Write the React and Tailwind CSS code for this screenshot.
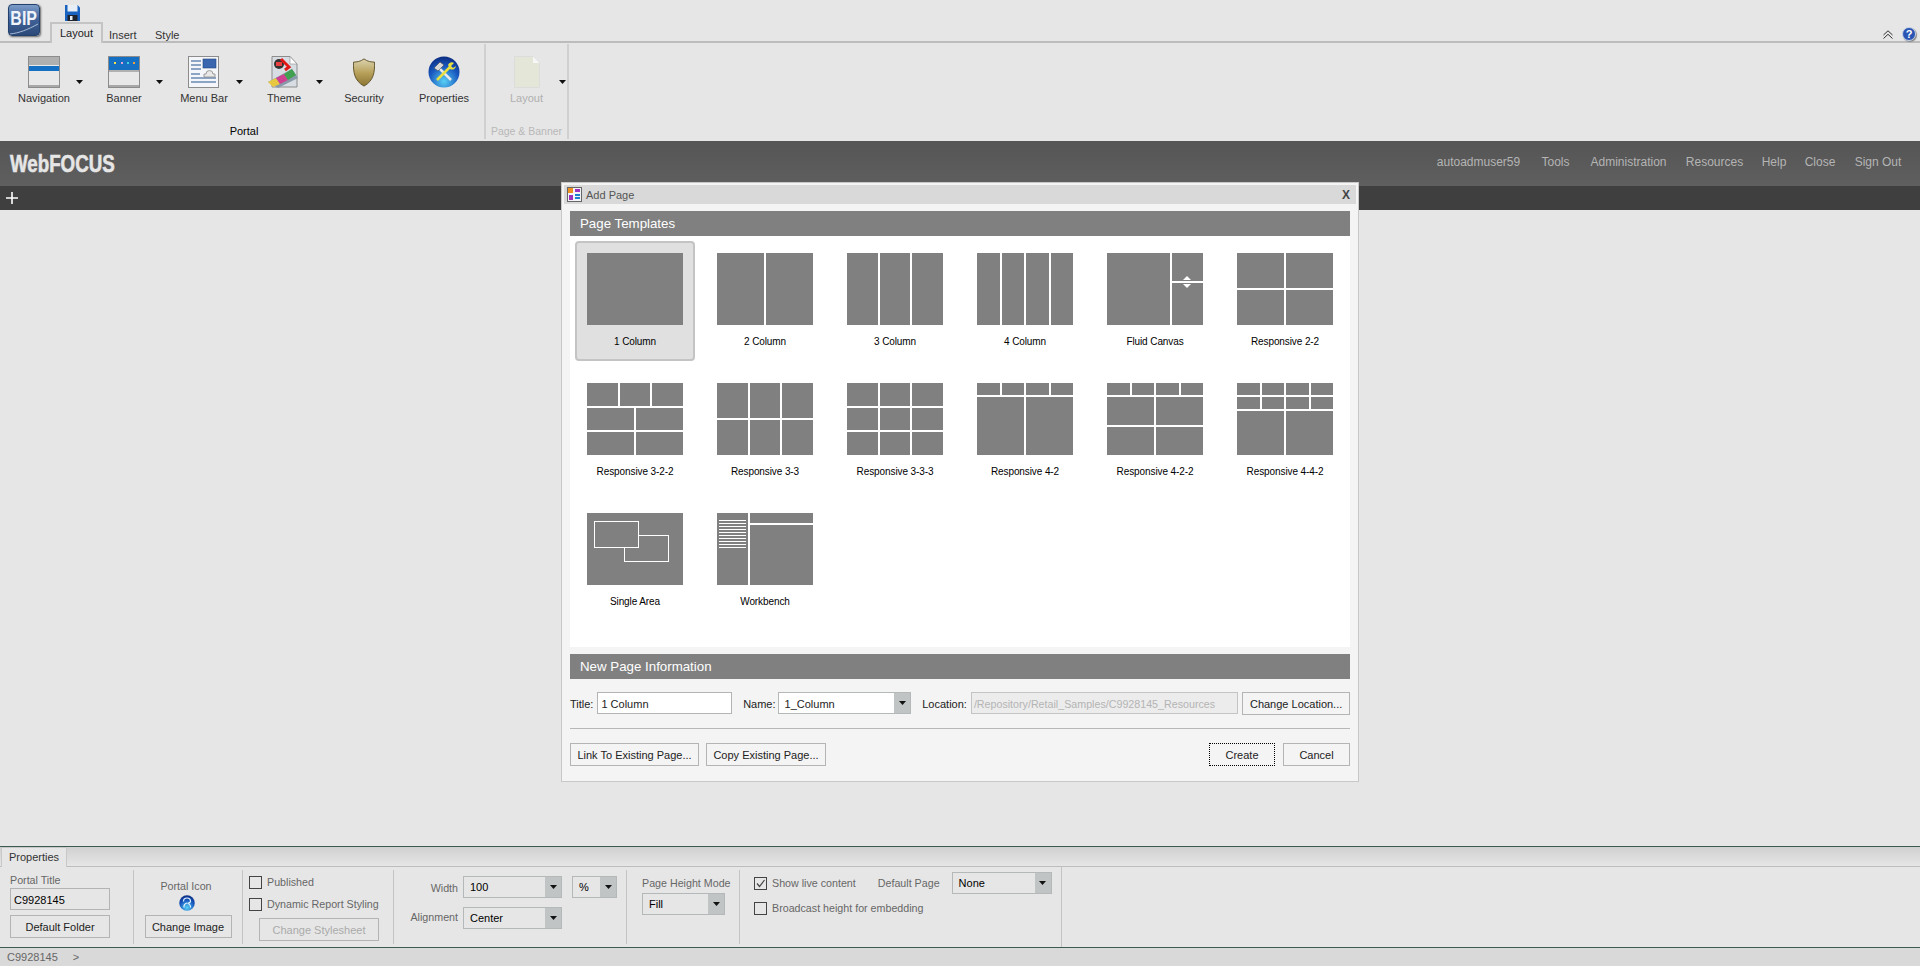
import React from "react";

// Each template is a list of rows: [height, columns]
const TEMPLATES = [
  { name: "1 Column", rows: [[72, 1]] },
  { name: "2 Column", rows: [[72, 2]] },
  { name: "3 Column", rows: [[72, 3]] },
  { name: "4 Column", rows: [[72, 4]] },
  { name: "Fluid Canvas", kind: "fluid" },
  { name: "Responsive 2-2", rows: [[35, 2], [35, 2]] },
  { name: "Responsive 3-2-2", rows: [[23, 3], [22, 2], [23, 2]] },
  { name: "Responsive 3-3", rows: [[35, 3], [35, 3]] },
  { name: "Responsive 3-3-3", rows: [[23, 3], [22, 3], [23, 3]] },
  { name: "Responsive 4-2", rows: [[12, 4], [58, 2]] },
  { name: "Responsive 4-2-2", rows: [[12, 4], [28, 2], [28, 2]] },
  { name: "Responsive 4-4-2", rows: [[12, 4], [12, 4], [44, 2]] },
  { name: "Single Area", kind: "single" },
  { name: "Workbench", kind: "workbench" },
];

const COLS = { 1: "grid-cols-1", 2: "grid-cols-2", 3: "grid-cols-3", 4: "grid-cols-4" };

function Thumb({ template }) {
  if (template.kind === "fluid") {
    return (
      <div className="relative flex h-[72px] w-[96px] gap-[2px]">
        <div className="w-[63px] bg-[#808080]" />
        <div className="flex w-[31px] flex-col gap-[2px]">
          <div className="h-[28px] bg-[#808080]" />
          <div className="h-[42px] bg-[#808080]" />
        </div>
        <svg className="absolute left-[76px] top-[23px]" width="8" height="12" viewBox="0 0 8 12">
          <path d="M4 0 L8 4 H0 Z M0 8 H8 L4 12 Z" fill="#fff" />
        </svg>
      </div>
    );
  }
  if (template.kind === "single") {
    return (
      <svg className="block" width="96" height="72" viewBox="0 0 96 72">
        <rect width="96" height="72" fill="#808080" />
        <rect x="37.5" y="22.5" width="44" height="26" fill="#808080" stroke="#fff" />
        <rect x="7.5" y="8.5" width="44" height="26" fill="#808080" stroke="#fff" />
      </svg>
    );
  }
  if (template.kind === "workbench") {
    return (
      <div className="flex h-[72px] w-[96px] gap-[2px]">
        <div className="flex w-[31px] flex-col gap-[2px] bg-[#808080] px-[2px] pt-[7px]">
          {Array.from({ length: 10 }).map((_, i) => (
            <div key={i} className="h-px bg-white" />
          ))}
        </div>
        <div className="flex w-[63px] flex-col gap-[2px]">
          <div className="h-[10px] bg-[#808080]" />
          <div className="h-[60px] bg-[#808080]" />
        </div>
      </div>
    );
  }
  return (
    <div className="flex h-[72px] w-[96px] flex-col gap-[2px]">
      {template.rows.map(([height, cols], r) => (
        <div key={r} className={`grid gap-[2px] ${COLS[cols]}`} style={{ height }}>
          {Array.from({ length: cols }).map((_, c) => (
            <div key={c} className="bg-[#808080]" />
          ))}
        </div>
      ))}
    </div>
  );
}

function Caret({ className = "" }) {
  return (
    <svg className={className} width="7" height="4" viewBox="0 0 7 4">
      <path d="M0 0 H7 L3.5 4 Z" fill="#111" />
    </svg>
  );
}

function Select({ value, className = "", text = "text-black" }) {
  return (
    <div className={`flex items-stretch border border-[#b4b8b8] bg-[#e6e6e6] ${className}`}>
      <span className={`flex-1 truncate pl-[6px] text-[11px] leading-[20px] ${text}`}>{value}</span>
      <span className="flex w-[16px] items-center justify-center bg-[#c0c4c4]">
        <Caret />
      </span>
    </div>
  );
}

function Btn({ children, className = "", disabled = false }) {
  return (
    <div
      className={`flex h-[23px] items-center justify-center border border-[#b4b4b4] pt-[2px] text-[11px] ${disabled ? "text-[#aaaaaa]" : "text-[#222222]"} ${className}`}
    >
      {children}
    </div>
  );
}

function Check({ checked = false }) {
  return (
    <span className="flex h-[13px] w-[13px] shrink-0 items-center justify-center border border-[#444444]">
      {checked && (
        <svg width="11" height="11" viewBox="0 0 11 11">
          <path d="M2 5.5 L4.5 8.5 L9.5 2" fill="none" stroke="#444" strokeWidth="1.2" />
        </svg>
      )}
    </span>
  );
}

function NavIcon() {
  return (
    <svg width="32" height="32" viewBox="0 0 32 32">
      <rect x="0.5" y="0.5" width="31" height="31" fill="#e8e8e8" stroke="#8c8c8c" />
      <rect x="1" y="1" width="30" height="8" fill="#b0b0b0" />
      <rect x="1" y="10" width="30" height="5" fill="#1570c4" />
      <rect x="1" y="29" width="30" height="2" fill="#a8a8a8" />
    </svg>
  );
}

function BannerIcon() {
  return (
    <svg width="32" height="32" viewBox="0 0 32 32">
      <rect x="0.5" y="0.5" width="31" height="31" fill="#e8e8e8" stroke="#8c8c8c" />
      <rect x="1" y="1" width="30" height="13" fill="#1570c4" />
      <rect x="1" y="14" width="30" height="2" fill="#b0b0b0" />
      <rect x="6" y="6" width="2" height="2" fill="#f4e04d" />
      <rect x="13" y="6" width="2" height="2" fill="#e6a0d0" />
      <rect x="19" y="6" width="2" height="2" fill="#40d0e0" />
      <rect x="25" y="6" width="2" height="2" fill="#f0a040" />
      <rect x="1" y="29" width="30" height="2" fill="#a8a8a8" />
    </svg>
  );
}

function MenuBarIcon() {
  return (
    <svg width="32" height="32" viewBox="0 0 32 32">
      <rect x="0.5" y="0.5" width="30" height="31" fill="#f4f6fa" stroke="#8c8c8c" />
      <rect x="15" y="3" width="13" height="9" fill="#3a66b0" stroke="#24467f" strokeWidth="0.6" />
      <path d="M3 5H13M3 9H13M3 13H13M3 18H12M3 22H28M3 26H28" stroke="#24558f" strokeWidth="1" />
      <path d="M18 18 a3.5 3.5 0 0 1 7 0 h2 v3 h-11 v-3 Z" fill="#e8e8e8" stroke="#888" strokeWidth="0.8" />
    </svg>
  );
}

function ThemeIcon() {
  return (
    <svg width="32" height="32" viewBox="0 0 32 32">
      <path d="M4 0.5 H22 L29 8 V31 H4 Z" fill="#d8dde4" stroke="#8c8c8c" />
      <path d="M22 0.5 V8 H29 Z" fill="#fff" stroke="#8c8c8c" strokeWidth="0.6" />
      <path d="M0 26 L24 13 L30 22 L10 32 Z" fill="#8899aa" />
      <path d="M0 26 L8 22 L12 28 L5 31 Z" fill="#e8c840" />
      <path d="M8 22 L16 18 L20 24 L12 28 Z" fill="#d04090" />
      <path d="M16 18 L24 13 L28 19 L20 24 Z" fill="#40a050" />
      <circle cx="11" cy="8" r="5" fill="#333" />
      <path d="M13 3 L21 11 L17 14" fill="none" stroke="#e01818" strokeWidth="3" />
      <rect x="8" y="6" width="6" height="4" fill="#e84040" />
    </svg>
  );
}

function ShieldIcon() {
  return (
    <svg width="24" height="29" viewBox="0 0 26 32">
      <defs>
        <linearGradient id="shield" x1="0" y1="0" x2="0" y2="1">
          <stop offset="0" stopColor="#dcd4b0" />
          <stop offset="0.5" stopColor="#b8a25c" />
          <stop offset="1" stopColor="#8a7430" />
        </linearGradient>
      </defs>
      <path
        d="M13 1 C9 4 5 4.5 1.5 4.5 C1 15 2 25 13 31 C24 25 25 15 24.5 4.5 C21 4.5 17 4 13 1 Z"
        fill="url(#shield)"
        stroke="#5a4c20"
        strokeWidth="1"
      />
    </svg>
  );
}

function GlobeIcon({ size = 32, swirl = false }) {
  return (
    <svg className="block" width={size} height={size} viewBox="0 0 32 32">
      <defs>
        <radialGradient id="globe" cx="0.5" cy="0.8" r="0.8">
          <stop offset="0" stopColor="#58d0f4" />
          <stop offset="0.6" stopColor="#1858c0" />
          <stop offset="1" stopColor="#0c2c80" />
        </radialGradient>
      </defs>
      <circle cx="16" cy="16" r="15.5" fill="url(#globe)" />
      {swirl && (
        <path d="M9 13 a7 7 0 0 1 14 0 q-1 4 -6 3 M16 16 q-7 2 -6 9 M17 17 q6 1 6 8" fill="none" stroke="#dff2ff" strokeWidth="2.4" />
      )}
    </svg>
  );
}

function PropertiesIcon() {
  return (
    <div className="relative">
      <GlobeIcon />
      <svg className="absolute left-0 top-0" width="32" height="32" viewBox="0 0 32 32">
        <path d="M10 11 L23 24" stroke="#e8e8e8" strokeWidth="2.5" />
        <path d="M6 12 L12 6 L16 9 L10 15 Z" fill="#d8d8d8" stroke="#333" strokeWidth="0.5" />
        <path d="M22 11 L9 24" stroke="#e8e040" strokeWidth="2.5" />
        <path d="M20 9 a4 4 0 0 1 6 -2 l-3 3 l2 2 l3 -2 a4 4 0 0 1 -6 3 Z" fill="#e8e040" />
      </svg>
    </div>
  );
}

function RibbonButton({ label, icon, caret = false }) {
  return (
    <div className="relative flex w-[80.4px] flex-col items-center">
      <div className="flex h-[32px] items-center justify-center">{icon}</div>
      <span className="mt-[2px] text-[11px] leading-[16px] text-[#333333]">{label}</span>
      {caret && <Caret className="absolute left-[71.5px] top-[24px]" />}
    </div>
  );
}

function Ribbon() {
  return (
    <div className="flex h-[98px] bg-[#e6e6e6]">
      <div className="mb-[2px] mt-px flex w-[486px] flex-col border-r-2 border-[#d0d0d0] pl-[4px] pt-[12px]">
        <div className="flex">
          <RibbonButton label="Navigation" icon={<NavIcon />} caret />
          <RibbonButton label="Banner" icon={<BannerIcon />} caret />
          <RibbonButton label="Menu Bar" icon={<MenuBarIcon />} caret />
          <RibbonButton label="Theme" icon={<ThemeIcon />} caret />
          <RibbonButton label="Security" icon={<ShieldIcon />} />
          <RibbonButton label="Properties" icon={<PropertiesIcon />} />
        </div>
        <div className="mt-[17px] text-center text-[11px] leading-[16px] text-black">Portal</div>
      </div>
      <div className="mb-[2px] mt-px flex w-[83px] flex-col border-r-2 border-[#d0d0d0] pt-[12px]">
        <div className="flex justify-center">
          <div className="relative flex w-[70px] flex-col items-center">
            <svg width="26" height="32" viewBox="0 0 26 32">
              <path d="M0.5 0.5 H19 L25.5 7 V31.5 H0.5 Z" fill="#e4e6d8" stroke="#dcdcdc" />
              <path d="M19 0.5 V7 H25.5 Z" fill="#f6f6f6" />
            </svg>
            <span className="mt-[2px] text-[11px] leading-[16px] text-[#b0b0b0]">Layout</span>
            <Caret className="absolute left-[67px] top-[24px]" />
          </div>
        </div>
        <div className="mt-[17px] text-center text-[10.5px] leading-[16px] text-[#b8b8b8]">Page &amp; Banner</div>
      </div>
    </div>
  );
}

function TopBar() {
  return (
    <div className="relative flex h-[43px] border-b-2 border-[#bcbcbc] bg-[#e6e6e6]">
      <div className="relative ml-[8px] mt-[4px] flex h-[32px] w-[32px] justify-center overflow-hidden rounded-[4px] border border-[#24406c] bg-gradient-to-b from-[#7c9cc8] via-[#3f6198] to-[#2c4a78] shadow-[1px_1px_2px_#666]">
        <span className="scale-x-[.8] pt-[3px] text-[20px] font-bold leading-none text-[#f0f4fa]">BIP</span>
        <svg className="absolute left-0 top-[18px]" width="30" height="12" viewBox="0 0 30 12">
          <path d="M1 11 C10 10 18 7 29 1" fill="none" stroke="#a8bcd8" strokeWidth="1" />
        </svg>
      </div>
      <div className="ml-[10px] flex flex-col items-start">
        <svg className="ml-[15px] mt-[5px]" width="15" height="16" viewBox="0 0 15 16">
          <path d="M0 0 H12.5 L15 2.5 V16 H0 Z" fill="#1a62c0" />
          <rect x="2.5" y="0" width="10" height="6.5" fill="#e8eef6" />
          <rect x="2.5" y="10" width="10" height="6" fill="#20242c" />
          <rect x="5" y="11" width="2.5" height="4" fill="#e8eef6" />
        </svg>
        <div className="absolute left-[50px] top-[22px] flex h-[21px] w-[53px] items-center justify-center border-x-2 border-t-2 border-[#c4c4c4] bg-[#e6e6e6] text-[11px] text-[#222222]">
          Layout
        </div>
      </div>
      <span className="absolute left-[109px] top-[28px] text-[11px] leading-[14px] text-[#333333]">Insert</span>
      <span className="absolute left-[155px] top-[28px] text-[11px] leading-[14px] text-[#333333]">Style</span>
      <svg className="absolute left-[1883px] top-[30px]" width="10" height="9" viewBox="0 0 10 9">
        <path d="M0.5 5 L5 0.8 L9.5 5 M0.5 8.5 L5 4.3 L9.5 8.5" fill="none" stroke="#333" strokeWidth="1" />
      </svg>
      <div className="absolute left-[1902px] top-[27px] flex h-[14px] w-[14px] items-center justify-center rounded-full border border-[#c8d4e8] bg-[#2a54b4] text-[11px] font-bold leading-none text-white shadow-[1px_1px_1px_#888]">
        ?
      </div>
    </div>
  );
}

function Banner() {
  const links = [
    ["autoadmuser59", "w-[85px]"],
    ["Tools", "w-[29px]"],
    ["Administration", "w-[77px]"],
    ["Resources", "w-[55px]"],
    ["Help", "w-[24px]"],
    ["Close", "w-[28px]"],
    ["Sign Out", "w-[48px]"],
  ];
  return (
    <div className="flex h-[45px] items-center justify-between bg-gradient-to-b from-[#555555] to-[#5f5f5f] pl-[10px] pr-[18px]">
      <span className="origin-left scale-x-[.78] text-[24px] font-bold leading-none text-[#e6e6e6] [-webkit-text-stroke:0.6px_#e6e6e6]">
        WebFOCUS
      </span>
      <div className="flex gap-[20px] pb-[4px] text-[12px] text-[#b4b4b4]">
        {links.map(([link, width]) => (
          <span key={link} className={`flex justify-center whitespace-nowrap ${width}`}>
            {link}
          </span>
        ))}
      </div>
    </div>
  );
}

function SectionHeader({ children }) {
  return (
    <div className="flex h-[25px] items-center bg-[#808080] pl-[10px] pt-px text-[13.3px] text-white">{children}</div>
  );
}

function DialogIcon() {
  return (
    <svg width="15" height="15" viewBox="0 0 15 15">
      <rect x="0.5" y="0.5" width="14" height="14" fill="#f4f4f8" stroke="#666" />
      <rect x="1" y="1" width="5" height="5" fill="#f09020" />
      <rect x="8" y="2" width="5" height="3" fill="#a030c0" />
      <rect x="2" y="8" width="4" height="5" fill="#a030c0" />
      <rect x="8" y="7" width="5" height="2" fill="#2080d0" />
      <rect x="8" y="10" width="5" height="2" fill="#2080d0" />
    </svg>
  );
}

function AddPageDialog() {
  return (
    <div className="absolute left-[561px] top-[182px] flex h-[600px] w-[798px] flex-col border border-[#c8c8c8] bg-[#f4f4f4] px-[2px] pt-[2px]">
      <div className="flex h-[19px] shrink-0 items-center bg-[#d9d9d9] pl-[3px] pr-[6px]">
        <DialogIcon />
        <span className="ml-[4px] flex-1 pt-[2px] text-[11px] text-[#555555]">Add Page</span>
        <span className="text-[12px] font-bold text-[#444444]">X</span>
      </div>
      <div className="flex flex-1 flex-col px-[6px] pt-[7px]">
        <SectionHeader>Page Templates</SectionHeader>
        <div className="h-[411px] bg-white pl-[5px] pt-[5px]">
          <div className="grid grid-cols-[repeat(6,120px)] gap-[10px]">
            {TEMPLATES.map((template, i) => (
              <div
                key={template.name}
                className={`flex h-[120px] flex-col items-center rounded-[4px] border-2 pt-[10px] ${i === 0 ? "border-[#c4c4c4] bg-[#e0e0e0]" : "border-transparent"}`}
              >
                <Thumb template={template} />
                <span className="mt-[10px] text-[10px] leading-[14px] tracking-[-0.1px] text-black">{template.name}</span>
              </div>
            ))}
          </div>
        </div>
        <div className="mt-[7px]">
          <SectionHeader>New Page Information</SectionHeader>
        </div>
        <div className="mt-[13px] flex h-[23px] items-start text-[11px] text-[#222222]">
          <span className="pt-px leading-[22px]">Title:</span>
          <div className="ml-[4px] h-[22px] w-[135px] border border-[#b4b4b4] bg-white pl-[3px] pt-px leading-[20px]">1 Column</div>
          <span className="ml-[11px] pt-px leading-[22px]">Name:</span>
          <div className="ml-[2px] flex h-[22px] w-[134px] items-stretch border border-[#b4b8b8] bg-white">
            <span className="flex-1 pl-[6px] pt-px leading-[20px]">1_Column</span>
            <span className="flex w-[16px] items-center justify-center bg-[#c0c4c4]">
              <Caret />
            </span>
          </div>
          <span className="ml-[11px] pt-px leading-[22px]">Location:</span>
          <div className="ml-[4px] h-[22px] w-[268px] truncate border border-[#c4c4c4] bg-[#ececec] pl-[2px] pt-px text-[10.7px] leading-[20px] text-[#b4b4b4]">
            /Repository/Retail_Samples/C9928145_Resources
          </div>
          <Btn className="ml-[4px] w-[108px]">Change Location...</Btn>
        </div>
        <div className="mt-[13px] h-px bg-[#b8b8b8]" />
        <div className="mt-[14px] flex items-center">
          <Btn className="w-[129px]">Link To Existing Page...</Btn>
          <Btn className="ml-[7px] w-[120px]">Copy Existing Page...</Btn>
          <div className="ml-auto flex h-[23px] w-[66px] items-center justify-center border border-dotted border-black pt-px text-[11px] text-[#222222]">
            Create
          </div>
          <Btn className="ml-[8px] w-[67px]">Cancel</Btn>
        </div>
      </div>
    </div>
  );
}

function PropertiesPanel() {
  const label = "text-[10.7px] leading-[14px] text-[#666666]";
  return (
    <div className="flex h-[81px] border-b border-[#3c5a50] bg-[#e6e6e6]">
      <div className="my-[3px] w-[134px] shrink-0 border-r border-[#c4c4c4] pl-[10px] pt-[3px]">
        <div className={label}>Portal Title</div>
        <div className="mt-[1px] h-[22px] w-[100px] border border-[#b4b4b4] pl-[3px] pt-px text-[11px] leading-[20px] text-black">C9928145</div>
        <Btn className="mt-[5px] w-[100px]">Default Folder</Btn>
      </div>
      <div className="my-[3px] flex w-[109px] shrink-0 flex-col items-center border-r border-[#c4c4c4] pt-[9px]">
        <div className={`pr-[4px] ${label}`}>Portal Icon</div>
        <div className="mt-[2px] pr-[3px]">
          <GlobeIcon size={16} swirl />
        </div>
        <Btn className="mt-[4px] w-[87px]">Change Image</Btn>
      </div>
      <div className="my-[3px] w-[151px] shrink-0 border-r border-[#c4c4c4] pl-[6px] pt-[5px]">
        <div className="flex items-center gap-[5px]">
          <Check />
          <span className={label}>Published</span>
        </div>
        <div className="mt-[8px] flex items-center gap-[5px]">
          <Check />
          <span className={label}>Dynamic Report Styling</span>
        </div>
        <Btn disabled className="ml-[10px] mt-[7px] w-[120px]">Change Stylesheet</Btn>
      </div>
      <div className="my-[3px] flex w-[233px] shrink-0 items-start border-r border-[#c4c4c4] pt-[6px]">
        <div className="flex flex-col gap-[9px]">
          <div className="flex w-[168px] items-center justify-end gap-[5px]">
            <span className={`pt-[2px] ${label}`}>Width</span>
            <Select value="100" className="h-[22px] w-[99px]" />
          </div>
          <div className="flex w-[168px] items-center justify-end gap-[5px]">
            <span className={`pb-[2px] ${label}`}>Alignment</span>
            <Select value="Center" className="h-[22px] w-[99px]" />
          </div>
        </div>
        <Select value="%" className="ml-[10px] h-[22px] w-[45px]" />
      </div>
      <div className="my-[3px] w-[113px] shrink-0 border-r border-[#c4c4c4] pl-[15px] pt-[6px]">
        <div className={label}>Page Height Mode</div>
        <Select value="Fill" className="mt-[3px] h-[22px] w-[83px]" />
      </div>
      <div className="flex w-[322px] shrink-0 flex-col border-r border-[#c4c4c4] pl-[14px] pt-[5px]">
        <div className="flex items-center">
          <Check checked />
          <span className={`ml-[5px] ${label}`}>Show live content</span>
          <span className={`ml-[22px] ${label}`}>Default Page</span>
          <Select value="None" className="ml-[12px] h-[22px] w-[100px]" />
        </div>
        <div className="mt-[7px] flex items-center gap-[5px]">
          <Check />
          <span className={label}>Broadcast height for embedding</span>
        </div>
      </div>
    </div>
  );
}

export default function App() {
  return (
    <div className="relative flex h-[966px] w-[1920px] flex-col overflow-hidden bg-[#e6e6e6] font-['Liberation_Sans',Arial,sans-serif]">
      <TopBar />
      <Ribbon />
      <Banner />
      <div className="flex h-[24px] items-center bg-[#3f3f3f] pl-[6px]">
        <svg width="12" height="12" viewBox="0 0 12 12">
          <path d="M6 0V12M0 6H12" stroke="#fff" strokeWidth="1.6" />
        </svg>
      </div>
      <div className="h-[637px] border-b border-[#3c5a50]" />
      <div className="h-[20px] border-b border-[#bdbdbd] bg-gradient-to-b from-[#d0d0d0] to-[#e6e6e6]">
        <div className="ml-px flex h-[20px] w-[66px] items-center justify-center border-x border-t border-[#c8c8c8] bg-[#e6e6e6] text-[11px] text-[#333333]">
          Properties
        </div>
      </div>
      <PropertiesPanel />
      <div className="flex flex-1 items-center bg-[#d9d9d9] pl-[7px] text-[11px] text-[#666666]">
        <span>C9928145</span>
        <span className="ml-[15px]">&gt;</span>
      </div>
      <AddPageDialog />
    </div>
  );
}
